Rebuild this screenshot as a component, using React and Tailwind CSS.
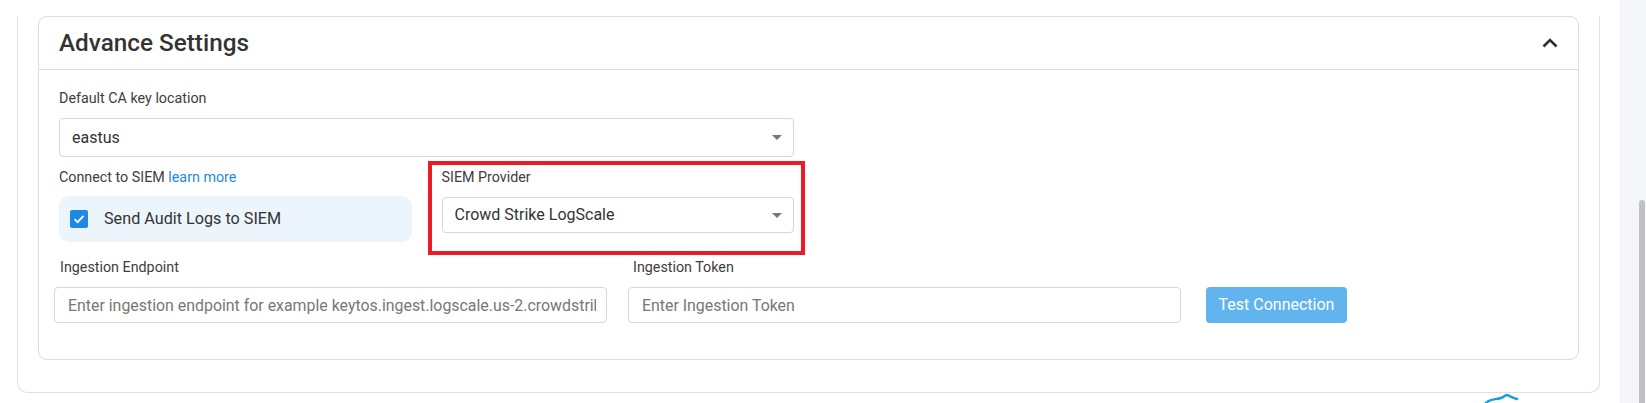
import { useState } from 'react';

const font = { fontFamily: 'Roboto, "Liberation Sans", sans-serif' };

function Caret() {
  return (
    <svg width="10" height="5" viewBox="0 0 10 5" className="shrink-0">
      <path d="M0 0 L10 0 L5 5 Z" fill="#767676" />
    </svg>
  );
}

function SelectBox({ value, height }) {
  return (
    <div
      className={`flex items-center justify-between rounded-[4px] border border-[#d3d6da] bg-white pl-[12px] pr-[11px] text-[16px] text-[#333] ${height}`}
    >
      <span>{value}</span>
      <Caret />
    </div>
  );
}

export default function App() {
  const [auditLogs, setAuditLogs] = useState(true);

  return (
    <div className="relative flex h-[403px] w-[1646px] overflow-hidden bg-white" style={font}>
      <div className="flex-1">
        {/* outer card, top edge scrolled out of view */}
        <div className="ml-[17px] w-[1583px] rounded-b-[10px] border-x border-b border-[#e0e0e0] px-5 pb-8">
          <div className="mt-4 rounded-[9px] border border-[#dddddd]">
            {/* Header */}
            <div className="flex items-center justify-between border-b border-[#dddddd] px-5 py-[10px]">
              <h2 className="text-[24.3px] font-medium leading-8 text-[#333]">Advance Settings</h2>
              <svg width="16" height="10" viewBox="0 0 16 10">
                <polyline points="1.5,8.5 8,2 14.5,8.5" fill="none" stroke="#2f2f2f" strokeWidth="2.6" />
              </svg>
            </div>

            {/* Body */}
            <div className="px-5 pt-[18px] pb-[36px]">
              <div className="w-[735px]">
                <p className="text-[14.3px] leading-5 text-[#3d3d3d]">Default CA key location</p>
                <div className="mt-[10px]">
                  <SelectBox value="eastus" height="h-[39px]" />
                </div>

                <div className="mt-[10px] grid grid-cols-2 gap-[30px]">
                  <div>
                    <p className="text-[14.3px] leading-5 text-[#3d3d3d]">
                      Connect to SIEM <span className="text-[#1e88e5]">learn more</span>
                    </p>
                    <label className="mt-[9px] flex h-[46px] w-[353px] cursor-pointer items-center gap-[16px] rounded-[10px] bg-[#ecf4fc] pl-[11px]">
                      <span
                        onClick={() => setAuditLogs(!auditLogs)}
                        className={`flex h-[18px] w-[18px] items-center justify-center rounded-[2px] ${auditLogs ? 'bg-[#1e88e5]' : 'border-2 border-[#777] bg-white'}`}
                      >
                        {auditLogs && (
                          <svg width="14" height="14" viewBox="0 0 14 14">
                            <polyline points="2.5,7.2 5.6,10.2 11.5,3.8" fill="none" stroke="#fff" strokeWidth="1.8" />
                          </svg>
                        )}
                      </span>
                      <span className="text-[16.2px] text-[#333]">Send Audit Logs to SIEM</span>
                    </label>
                  </div>

                  <div className="relative">
                    <p className="text-[14.3px] leading-5 text-[#3d3d3d]">SIEM Provider</p>
                    <div className="mt-[10px]">
                      <SelectBox value="Crowd Strike LogScale" height="h-[36px]" />
                    </div>
                    {/* highlight frame around the provider field */}
                    <div className="pointer-events-none absolute -top-[6px] -left-[14px] -right-[11px] -bottom-[13px] border-[4px] border-[#ed1c24]" />
                  </div>
                </div>
              </div>

              {/* Ingestion settings */}
              <div className="-ml-[5px] mt-[15px] flex items-end">
                <div className="w-[553px]">
                  <p className="pl-[6px] text-[14.3px] leading-5 text-[#3d3d3d]">Ingestion Endpoint</p>
                  <input
                    className="mt-[10px] h-[36px] w-full rounded-[4px] border border-[#d3d6da] pl-[13px] pr-[10px] text-[15.9px] text-[#333] placeholder:text-[#777] outline-none"
                    placeholder="Enter ingestion endpoint for example keytos.ingest.logscale.us-2.crowdstrike.com"
                    style={font}
                  />
                </div>
                <div className="ml-[21px] w-[553px]">
                  <p className="pl-[5px] text-[14.3px] leading-5 text-[#3d3d3d]">Ingestion Token</p>
                  <input
                    className="mt-[10px] h-[36px] w-full rounded-[4px] border border-[#d3d6da] px-[13px] text-[15.9px] text-[#333] placeholder:text-[#777] outline-none"
                    placeholder="Enter Ingestion Token"
                    style={font}
                  />
                </div>
                <button
                  className="ml-[25px] h-[36px] w-[141px] rounded-[4px] bg-[#62b4ee] text-[16px] text-white"
                  style={font}
                >
                  Test Connection
                </button>
              </div>
            </div>
          </div>
        </div>
      </div>

      {/* right rail with scrollbar */}
      <div className="flex w-[26px] flex-col justify-end border-l border-[#eceff3] bg-[#f4f6f9]">
        <div className="ml-auto mr-[1px] h-[203px] w-[6px] rounded-t-[3px] bg-[#c1c1c1]" />
      </div>

      {/* top of the floating help widget */}
      <svg className="absolute left-[1483px] top-[394px]" width="36" height="12" viewBox="0 0 36 12">
        <path d="M2 10 C6 4 12 6 18 4 C21 3 22 1 24 1 C27 2 30 4 34 5" fill="none" stroke="#1b9be0" strokeWidth="2.4" strokeLinecap="round" />
      </svg>
    </div>
  );
}
